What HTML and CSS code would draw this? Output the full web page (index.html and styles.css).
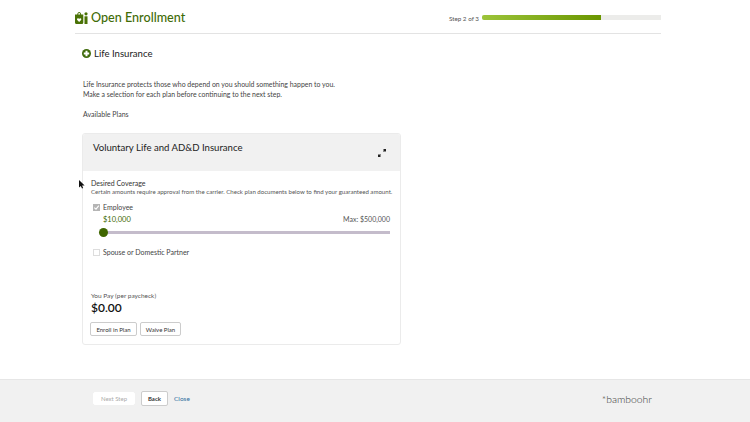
FILE: index.html
```html
<!DOCTYPE html>
<html lang="en">
<head>
<meta charset="utf-8">
<title>Open Enrollment</title>
<link rel="stylesheet" href="styles.css">
</head>
<body>
<div class="page">
  <main class="wrap">
    <header class="top">
      <div class="brand">
        <svg class="brand-icon" viewBox="0 0 13 12" width="13" height="12">
          <path fill="#4a7206" d="M0 2.500h2.200C2.400 1 3.200 0 4.200 0S6 1 6.200 2.500H8.300v8c0 .9-.6 1.500-1.400 1.500H1.400C.6 12 0 11.400 0 10.500zM3.200 2.500h2c-.1-1-.5-1.500-1-1.500s-.9.500-1 1.500z"/>
          <path fill="#fff" d="M4.150 10 2.200 7.900c-.8-1 .6-2.300 1.500-1.300l.45.500.45-.5c.9-1 2.300.3 1.500 1.300z"/>
          <rect x="9.500" y="4.300" width="3" height="7.700" fill="#4a7206"/>
          <circle cx="11" cy="1.800" r="1.600" fill="#4a7206"/>
        </svg>
        <span class="brand-name">Open Enrollment</span>
      </div>
      <div class="progress">
        <span class="step">Step 2 of 3</span>
        <div class="track"><div class="fill"></div></div>
      </div>
    </header>
    <section class="content">
      <h1 class="heading">
        <svg viewBox="0 0 9 9" width="9" height="9">
          <circle cx="4.500" cy="4.500" r="4.500" fill="#3f6a0a"/>
          <path fill="#fff" d="M3.500 1.800h2v1.700h1.700v2H5.500v1.700h-2V5.500H1.800v-2h1.700z"/>
        </svg>
        Life Insurance
      </h1>
      <p class="intro">Life Insurance protects those who depend on you should something happen to you.<br>Make a selection for each plan before continuing to the next step.</p>
      <p class="avail">Available Plans</p>
      <article class="card">
        <div class="card-head">
          <h2 class="card-title">Voluntary Life and AD&amp;D Insurance</h2>
          <svg class="expand" viewBox="0 0 8 8" width="8" height="8">
            <path fill="#222" d="M0 8V5l1 1 1-1 1 1-1 1 1 1zM8 0v3L7 2 6 3 5 2l1-1-1-1z"/>
          </svg>
        </div>
        <div class="card-body">
          <div class="label">Desired Coverage</div>
          <div class="note">Certain amounts require approval from the carrier. Check plan documents below to find your guaranteed amount.</div>
          <div class="check-row">
            <span class="box checked">
              <svg viewBox="0 0 7 7" width="7" height="7"><path d="M1.300 3.600 3 5.200 5.800 1.600" fill="none" stroke="#fff" stroke-width="1.100"/></svg>
            </span>
            <span>Employee</span>
          </div>
          <div class="amounts">
            <span class="amount">$10,000</span>
            <span class="max">Max: $500,000</span>
          </div>
          <div class="slider"><span class="knob"></span></div>
          <div class="check-row spouse">
            <span class="box"></span>
            <span>Spouse or Domestic Partner</span>
          </div>
          <div class="pay-label">You Pay (per paycheck)</div>
          <div class="pay">$0.00</div>
          <div class="actions">
            <button class="btn btn-enroll">Enroll in Plan</button>
            <button class="btn btn-waive">Waive Plan</button>
          </div>
        </div>
      </article>
    </section>
  </main>
  <footer class="foot">
    <div class="foot-inner">
      <div class="foot-actions">
        <button class="btn btn-disabled">Next Step</button>
        <button class="btn btn-back">Back</button>
        <a class="close" href="#">Close</a>
      </div>
      <span class="logo">*bamboohr</span>
    </div>
  </footer>
  <svg class="cursor" viewBox="0 0 6 9" width="6" height="9"><path d="M0 0v7.600l1.800-1.700L3 8.600l1.200-.5L3 5.500h2.600z" fill="#111"/></svg>
</div>
</body>
</html>
```
FILE: styles.css
```css
* { box-sizing: border-box; }
html, body { margin: 0; padding: 0; }
body {
  font-family: Lato, "Open Sans", sans-serif;
  color: #333;
  background: #fff;
  overflow: hidden;
}
.page {
  position: relative;
  width: 750px;
  height: 422px;
  display: flex;
  flex-direction: column;
  justify-content: space-between;
}
.wrap { width: 586px; margin-left: 75px; }
.top {
  height: 34px;
  border-bottom: 1px solid #e3e3e3;
  display: flex;
  align-items: center;
  justify-content: space-between;
  padding-top: 2px;
}
.brand { display: flex; align-items: center; gap: 3px; }
.brand-icon { display: block; }
.brand-name { font-size: 12.6px; font-weight: 500; color: #3f6c06; line-height: 16px; }
.progress { display: flex; align-items: center; gap: 3px; }
.step { font-size: 6.3px; color: #555; padding-top: 1px; }
.track { width: 179px; height: 5px; background: #ececea; border-radius: 2px 0 0 2px; overflow: hidden; }
.fill {
  width: 119px;
  height: 5px;
  background: linear-gradient(90deg, #9cc43a, #6a9600);
}
.content { padding-left: 7px; }
.heading {
  margin: 13px 0 0;
  font-size: 9.6px;
  font-weight: 400;
  line-height: 13px;
  color: #222;
  display: flex;
  align-items: center;
  gap: 3px;
}
.intro {
  margin: 19px 0 0 1px;
  font-size: 6.93px;
  line-height: 10px;
  color: #444;
}
.avail {
  margin: 10px 0 0 1px;
  font-size: 7px;
  line-height: 10px;
  color: #444;
}
.card {
  width: 319px;
  height: 212px;
  margin-top: 14px;
  border: 1px solid #ebebeb;
  border-radius: 3px;
  overflow: hidden;
}
.card-head {
  height: 37px;
  background: #f1f1f1;
  display: flex;
  justify-content: space-between;
  padding: 8px 14px 0 10px;
}
.card-title {
  margin: 0;
  font-size: 9.6px;
  font-weight: 400;
  line-height: 12px;
  color: #222;
}
.expand { margin-top: 7px; }
.card-body { padding: 8px 10px 0 8px; font-size: 7px; }
.label { line-height: 9px; color: #333; }
.note { line-height: 8px; font-size: 6.1px; color: #555; white-space: nowrap; }
.check-row {
  display: flex;
  align-items: center;
  gap: 3px;
  margin-top: 7px;
  line-height: 9px;
  color: #444;
}
.box {
  width: 7px;
  height: 7px;
  border: 1px solid #ddd;
  background: #fff;
  margin-left: 2px;
  display: flex;
}
.box.checked { background: #b5b5b5; border: 0; }
.amounts {
  display: flex;
  justify-content: space-between;
  margin: 3px 0 0 12px;
  line-height: 9px;
}
.amount { color: #3f6c06; font-size: 7.5px; }
.max { color: #555; }
.slider {
  position: relative;
  height: 3px;
  margin: 7px 0 0 12px;
  background: #c4bccb;
}
.knob {
  position: absolute;
  left: -4px;
  top: -3px;
  width: 9px;
  height: 9px;
  border-radius: 50%;
  background: #3f6600;
}
.spouse { margin-top: 14px; }
.pay-label { margin-top: 34px; line-height: 9px; color: #555; font-size: 6.5px; }
.pay { font-size: 12px; font-weight: 600; line-height: 14px; color: #111; margin-top: 1px; }
.actions { display: flex; gap: 3px; margin: 7px 0 0 -1px; }
.btn {
  font-family: inherit;
  font-size: 6px;
  height: 14px;
  padding: 0;
  color: #333;
  background: #fff;
  border: 1px solid #ccc;
  border-radius: 2px;
}
.btn-enroll { width: 47px; }
.btn-waive { width: 41px; }
.foot {
  height: 43px;
  background: #f1f1f1;
  border-top: 1px solid #e6e6e6;
}
.foot-inner {
  width: 586px;
  margin-left: 75px;
  height: 100%;
  display: flex;
  justify-content: space-between;
  align-items: center;
  padding: 0 9px 5px 18px;
}
.foot-actions { display: flex; align-items: center; gap: 6px; }
.btn-disabled { width: 42px; height: 13px; color: #aaa; border-color: #fff; }
.btn-back { width: 27px; height: 15px; font-weight: 700; color: #333; }
.close { font-size: 6.5px; color: #2f6f9f; text-decoration: none; }
.logo { font-size: 10.4px; font-weight: 300; color: #333; }
.cursor { position: absolute; left: 79px; top: 180px; }
```
